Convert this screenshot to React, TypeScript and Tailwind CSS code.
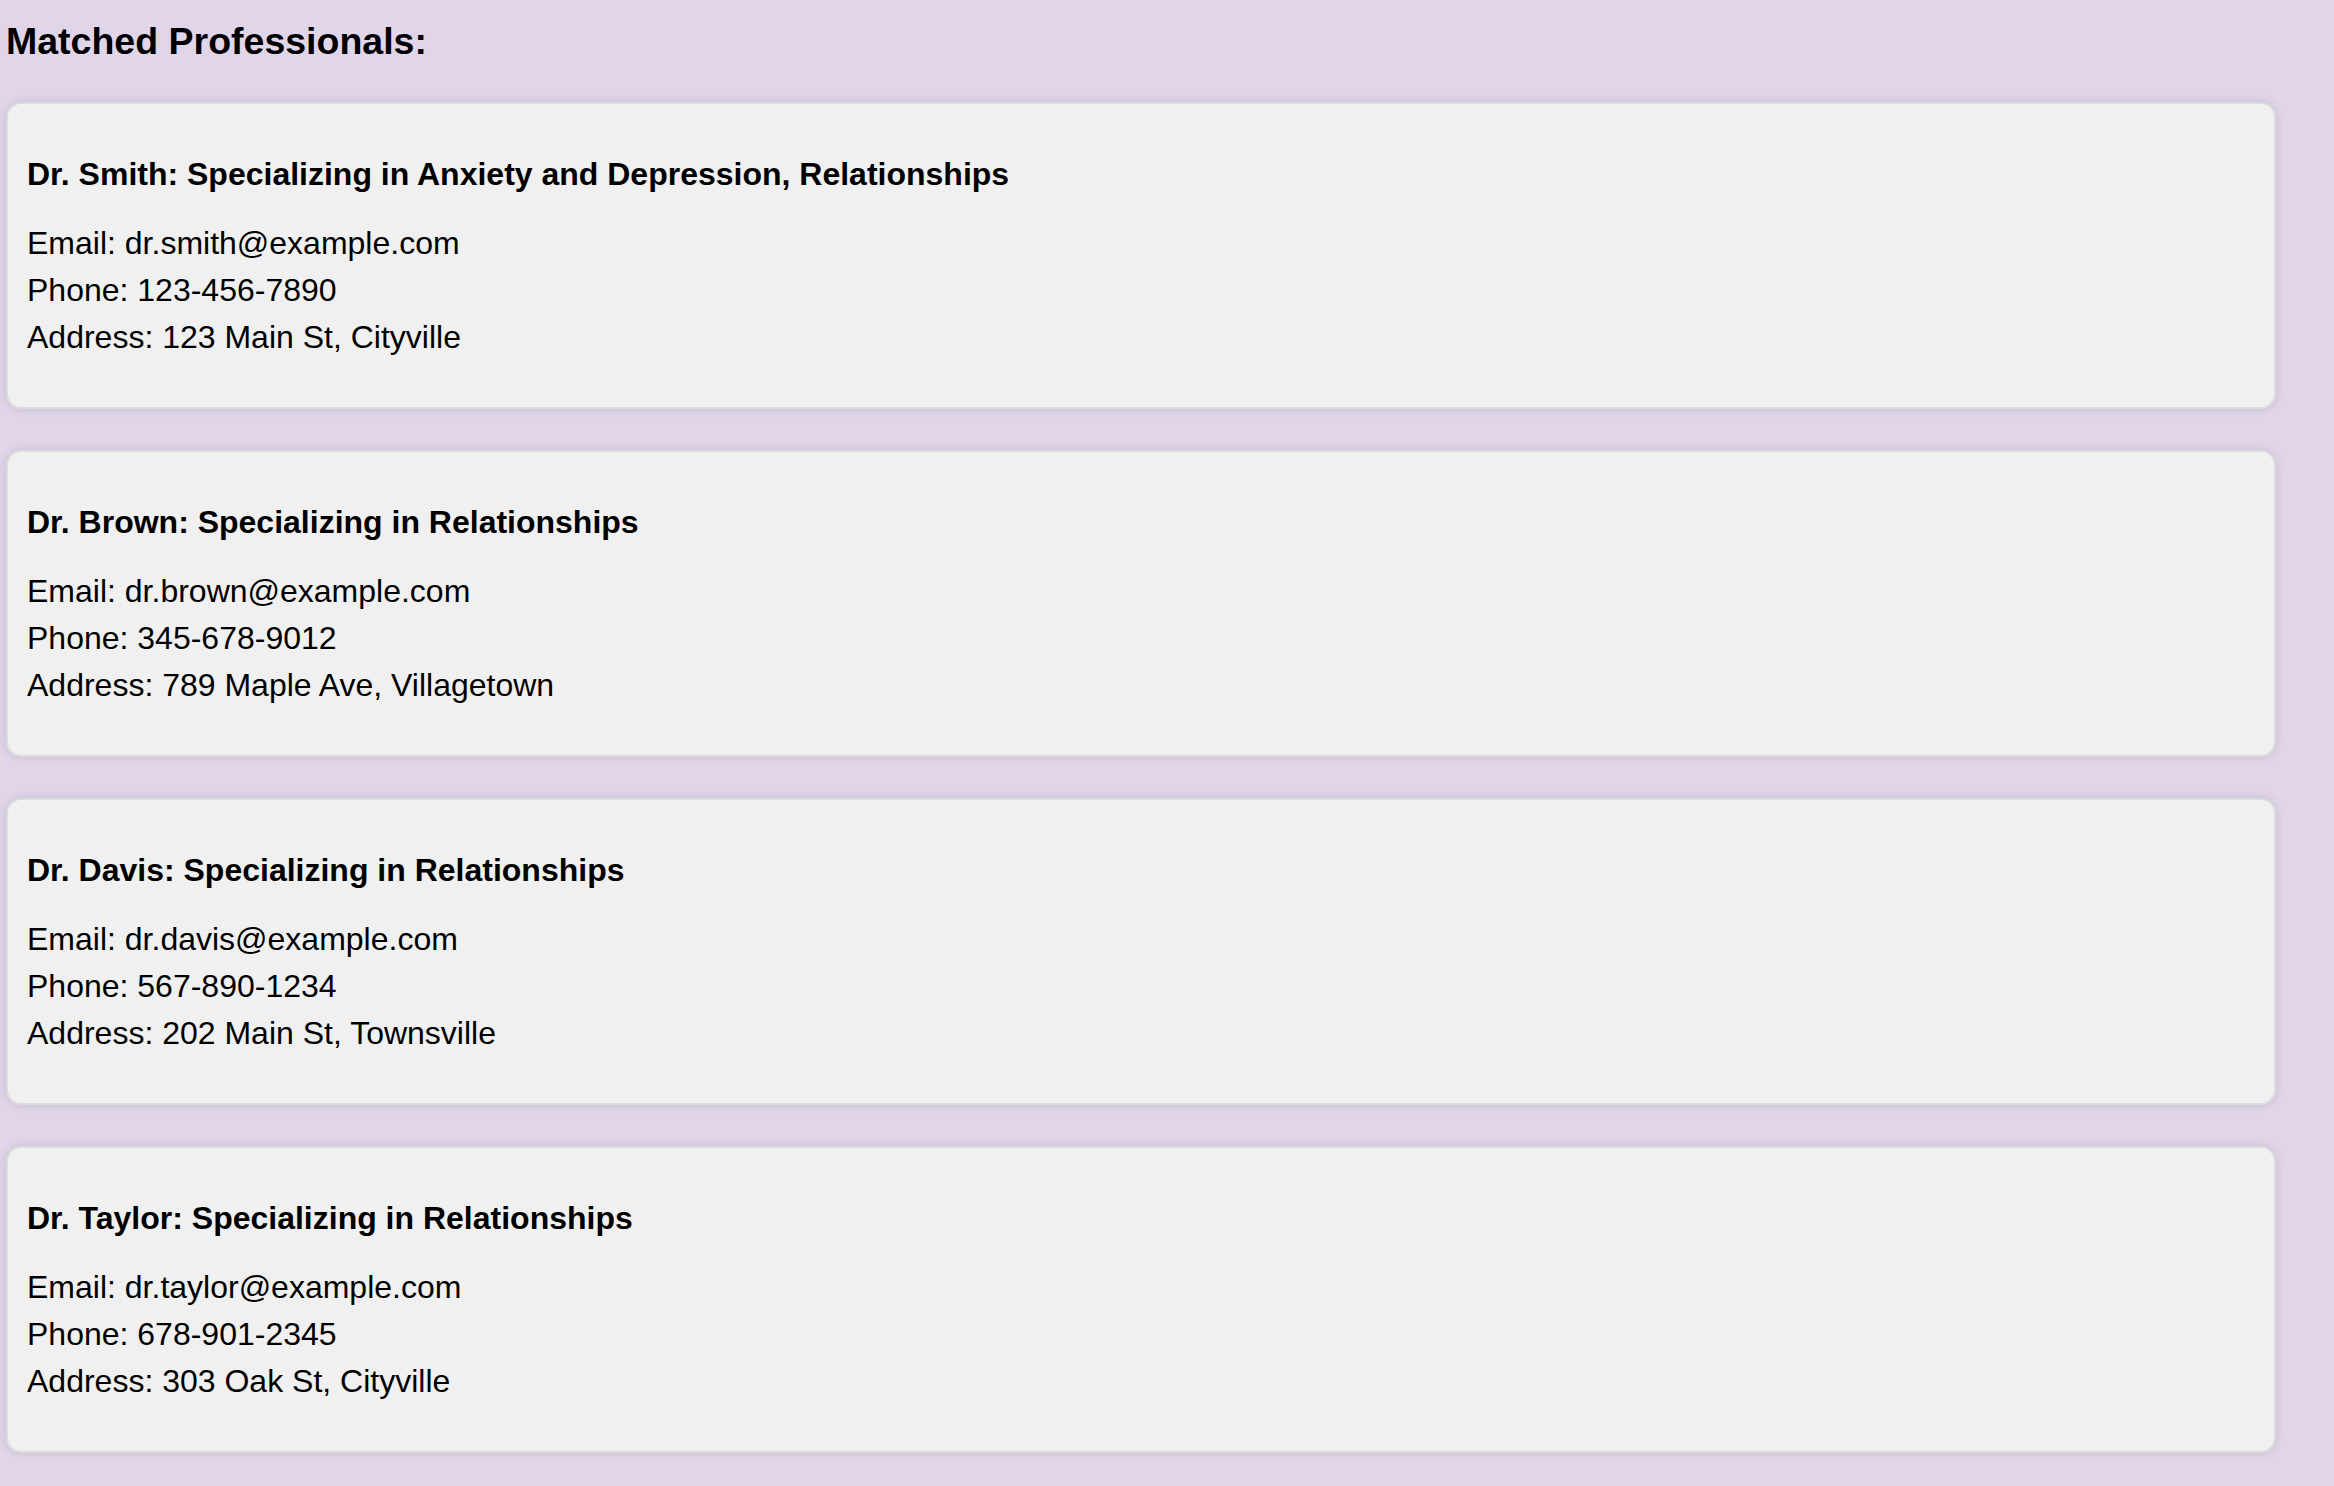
import React from 'react';

type Pro = {
  name: string;
  specialty: string;
  email: string;
  phone: string;
  address: string;
};

const pros: Pro[] = [
  {
    name: 'Dr. Smith',
    specialty: 'Anxiety and Depression, Relationships',
    email: 'dr.smith@example.com',
    phone: '123-456-7890',
    address: '123 Main St, Cityville',
  },
  {
    name: 'Dr. Brown',
    specialty: 'Relationships',
    email: 'dr.brown@example.com',
    phone: '345-678-9012',
    address: '789 Maple Ave, Villagetown',
  },
  {
    name: 'Dr. Davis',
    specialty: 'Relationships',
    email: 'dr.davis@example.com',
    phone: '567-890-1234',
    address: '202 Main St, Townsville',
  },
  {
    name: 'Dr. Taylor',
    specialty: 'Relationships',
    email: 'dr.taylor@example.com',
    phone: '678-901-2345',
    address: '303 Oak St, Cityville',
  },
];

function ProCard({ pro }: { pro: Pro }) {
  return (
    <div className="bg-[#f0f0f0] border-2 border-[#dcdcdc] rounded-[15px] shadow-[0_0_10px_rgba(0,0,0,0.12)] pt-[52px] pb-[46px] px-[19px]">
      <h4 className="m-0 text-[32px] leading-[37px] font-bold text-black mb-[27px]">
        {pro.name}: Specializing in {pro.specialty}
      </h4>
      <div className="text-[32px] leading-[47px] text-black">
        <div>Email: {pro.email}</div>
        <div>Phone: {pro.phone}</div>
        <div>Address: {pro.address}</div>
      </div>
    </div>
  );
}

export default function App() {
  return (
    <div className="min-h-screen bg-[#e1d5ea] pl-[6px] pr-[58px] pt-[20px] pb-[32px] font-['Liberation_Sans',Arial,sans-serif]">
      <h3 className="m-0 text-[37.5px] leading-[43px] font-bold text-black">Matched Professionals:</h3>
      <div className="flex flex-col gap-[41px] mt-[39px]">
        {pros.map((p) => (
          <ProCard key={p.name} pro={p} />
        ))}
      </div>
    </div>
  );
}
